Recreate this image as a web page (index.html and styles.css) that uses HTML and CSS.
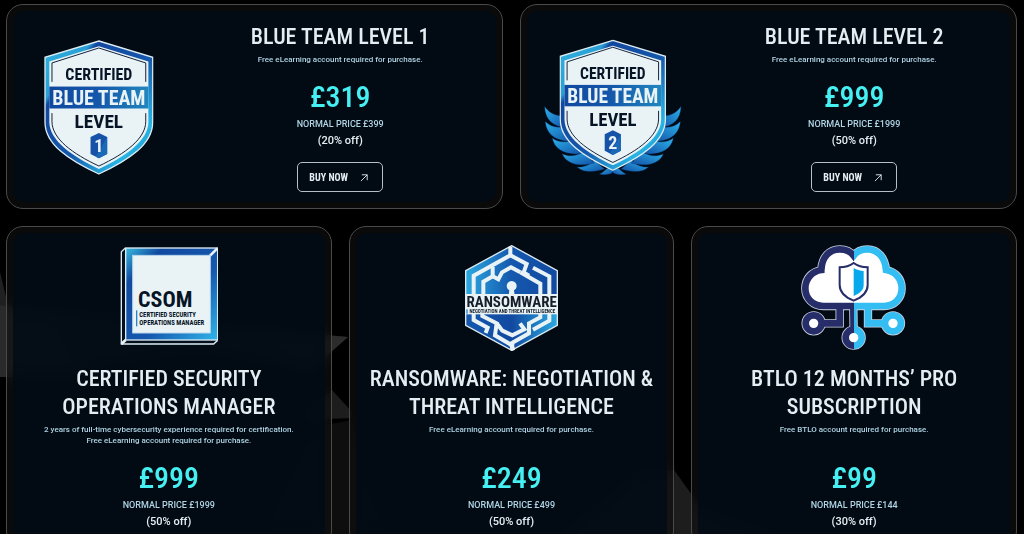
FILE: index.html
```html
<!DOCTYPE html>
<html lang="en">

<head>
	<meta charset="UTF-8">
	<meta name="viewport" content="width=device-width, initial-scale=1.0">
	<title>Certification Offers</title>
	<link rel="stylesheet" href="styles.css">
</head>

<body>
	<svg class="backdrop" viewBox="0 0 1024 534" preserveAspectRatio="xMidYMin slice" aria-hidden="true">
		<polygon points="0,272 8,305 160,318 348,337 310,370 200,352 0,377" fill="#202020" />
		<polygon points="0,305 60,318 90,377 0,377" fill="#2a2a2a" />
		<polygon points="250,330 348,337 305,375" fill="#2c2c2c" />
		<polygon points="290,420 332,390 352,412 352,418 300,420" fill="#1d1d1d" />
		<polygon points="250,534 300,430 352,420 400,534" fill="#0e0e0e" />
		<polygon points="560,534 640,470 674,470 700,506 780,534" fill="#1d1d1d" />
	</svg>

	<!-- shared badge shape -->
	<svg class="defs" aria-hidden="true">
		<defs>
			<linearGradient id="rim" x1="0" y1="0" x2="1" y2="1">
				<stop offset="0" stop-color="#2fb4e0" />
				<stop offset=".22" stop-color="#2a9fd4" />
				<stop offset=".25" stop-color="#12479f" />
				<stop offset=".55" stop-color="#1558ab" />
				<stop offset=".8" stop-color="#27b5e4" />
				<stop offset="1" stop-color="#1b7fc4" />
			</linearGradient>
			<linearGradient id="band" x1="0" y1="0" x2="1" y2="0">
				<stop offset="0" stop-color="#0f489f" />
				<stop offset=".5" stop-color="#1558ab" />
				<stop offset="1" stop-color="#2186bf" />
			</linearGradient>
			<linearGradient id="feather" x1="0" y1="0" x2="1" y2="1">
				<stop offset="0" stop-color="#2cb3ea" />
				<stop offset="1" stop-color="#124fa6" />
			</linearGradient>
			<symbol id="shield" viewBox="134 118 330 406">
				<path d="M299 121 L461 170 V365 C461 432 388 480 299 521 C210 480 137 432 137 365 V170Z" fill="url(#rim)" stroke="#dcebf3" stroke-width="4" />
				<path d="M299 137 L448 183 V364 C448 420 381 467 299 506 C217 467 150 420 150 364 V183Z" fill="#e9f3f6" />
				<path d="M158 244 V187 L299 142 L440 187 V244 M158 338 V363 C158 415 220 460 299 497 C378 460 440 415 440 363 V338" fill="none" stroke="#142137" stroke-width="3" />
				<rect x="150" y="258" width="298" height="66" fill="url(#band)" />
				<text class="badge-text" x="299" y="239" font-size="48" fill="#071426">CERTIFIED</text>
				<text class="badge-text" x="299" y="313" font-size="60" fill="#e9f3f6">BLUE TEAM</text>
				<text class="badge-text" x="299" y="384" font-size="58" fill="#071426">LEVEL</text>
				<path d="M299 398 L324 410 V461 L299 474 L274 461 V410Z" fill="#1552a8" />
				<path d="M324 410 V461 L299 474 L290 469Z" fill="#1b69b6" />
			</symbol>
		</defs>
	</svg>

	<main class="offers">
		<section class="row row-two">
			<article class="card">
				<div class="card-inner wide">
					<div class="art">
						<svg class="badge" viewBox="134 118 330 406" role="img" aria-label="Certified Blue Team Level 1">
							<use href="#shield" x="134" y="118" width="330" height="406" />
							<text class="badge-text" x="299" y="456" font-size="54" fill="#e9f3f6">1</text>
						</svg>
					</div>
					<div class="info">
						<h2>Blue Team Level 1</h2>
						<p class="note">Free eLearning account required for purchase.</p>
						<p class="price">£319</p>
						<p class="normal">Normal price £399</p>
						<p class="off">(20% off)</p>
						<button class="buy" type="button">Buy now
							<svg viewBox="0 0 10 10" aria-hidden="true"><path d="M1 9 L8 2 M2 2 H8 V8" /></svg>
						</button>
					</div>
				</div>
			</article>

			<article class="card">
				<div class="card-inner wide">
					<div class="art">
						<svg class="badge winged" viewBox="73 55 414 412" role="img" aria-label="Certified Blue Team Level 2">
							<g id="wing" fill="url(#feather)" stroke="#0a2e66" stroke-width="1">
								<path d="M240 462 C255 464 275 464 281 454 L270 440 C260 445 252 456 240 462Z" />
								<path d="M173 440 C190 458 225 456 255 446 L225 420 C210 434 192 442 173 440Z" />
								<path d="M128 400 C140 432 180 440 225 428 L190 394 C170 408 148 410 128 400Z" />
								<path d="M98 353 C104 390 145 408 192 398 L160 358 C138 368 115 366 98 353Z" />
								<path d="M77 303 C80 345 115 366 166 362 L134 318 C112 324 92 318 77 303Z" />
								<path d="M75 258 C76 296 98 318 140 322 L124 286 C104 285 88 276 75 258Z" />
							</g>
							<use href="#wing" transform="translate(560 0) scale(-1 1)" />
							<use href="#shield" x="119" y="56" width="322" height="397" />
							<text class="badge-text" x="280" y="387" font-size="54" fill="#e9f3f6">2</text>
						</svg>
					</div>
					<div class="info">
						<h2>Blue Team Level 2</h2>
						<p class="note">Free eLearning account required for purchase.</p>
						<p class="price">£999</p>
						<p class="normal">Normal price £1999</p>
						<p class="off">(50% off)</p>
						<button class="buy" type="button">Buy now
							<svg viewBox="0 0 10 10" aria-hidden="true"><path d="M1 9 L8 2 M2 2 H8 V8" /></svg>
						</button>
					</div>
				</div>
			</article>
		</section>

		<section class="row row-three">
			<article class="card">
				<div class="card-inner">
					<svg class="logo" viewBox="60 34 296 318" role="img" aria-label="CSOM">
						<defs>
							<linearGradient id="frame" x1="0" y1="0" x2="1" y2="1">
								<stop offset="0" stop-color="#38bce0" />
								<stop offset=".2" stop-color="#1149a0" />
								<stop offset=".6" stop-color="#1558ae" />
								<stop offset="1" stop-color="#2fb6ea" />
							</linearGradient>
						</defs>
						<path d="M76 43 L64 54 V331 H341 L353 320 M64 331 L77 319" fill="#04101e" stroke="#dcebf3" stroke-width="4" />
						<rect x="77" y="43" width="276" height="276" fill="url(#frame)" stroke="#dcebf3" stroke-width="4" />
						<path d="M64 331 L77 319 M328 68 L352 44" stroke="#e9f3f6" stroke-width="8" />
						<rect x="98" y="65" width="233" height="233" fill="#e9f3f6" stroke="#b8d6ec" stroke-width="3" />
						<text class="badge-text start" x="114" y="220" font-size="66" fill="#071426">CSOM</text>
						<rect x="108" y="230" width="4" height="48" fill="#2584cc" />
						<text class="badge-text start" x="118" y="249" font-size="20" fill="#071426">CERTIFIED SECURITY</text>
						<text class="badge-text start" x="118" y="275" font-size="20" fill="#071426">OPERATIONS MANAGER</text>
					</svg>
					<h2>Certified Security Operations Manager</h2>
					<p class="note">2 years of full-time cybersecurity experience required for certification.<br>Free eLearning account required for purchase.</p>
					<p class="price">£999</p>
					<p class="normal">Normal price £1999</p>
					<p class="off">(50% off)</p>
				</div>
			</article>

			<article class="card">
				<div class="card-inner">
					<svg class="logo" viewBox="60 29 280 318" role="img" aria-label="Ransomware: Negotiation and Threat Intelligence">
						<defs>
							<linearGradient id="maze" x1="0" y1="0" x2="1" y2="0">
								<stop offset="0" stop-color="#2ba9e1" />
								<stop offset=".5" stop-color="#1558ae" />
								<stop offset="1" stop-color="#1149a0" />
							</linearGradient>
							<linearGradient id="maze-low" x1="0" y1="0" x2="1" y2="0">
								<stop offset="0" stop-color="#1558ae" />
								<stop offset=".5" stop-color="#1149a0" />
								<stop offset="1" stop-color="#2ba9e1" />
							</linearGradient>
						</defs>
						<path d="M62 180 V106 L200 31 L337 106 V180Z" fill="url(#maze)" />
						<path d="M62 236 V270 L200 345 L337 270 V236Z" fill="url(#maze-low)" />
						<path d="M62 180 V106 L200 31 L337 106 V270 L200 345 L62 270Z" fill="none" stroke="#dcebf3" stroke-width="4" />
						<g fill="none" stroke="#e9f3f6" stroke-width="12">
							<path d="M86 182 V121 L196 60 V34" />
							<path d="M115 182 V139 L143 123 L160 132 L171 111 L198 96 L226 111" />
							<path d="M143 123 V95" />
							<path d="M196 60 L245 86 L236 111 L252 121" />
							<path d="M264 97 L313 123 V182" />
							<path d="M226 111 L286 145 V182" />
							<path d="M86 234 V254 L128 277 L122 293" />
							<path d="M112 234 V242 L155 264 L150 300 L198 328 L205 345" />
							<path d="M155 264 L172 286 L202 300 L238 282 L225 264" />
							<path d="M202 318 V345 M202 322 L252 294 V264 L286 246 V234" />
							<path d="M313 234 V256 L264 283" />
						</g>
						<path d="M191 180 L193 165 A15 15 0 1 1 207 165 L209 180Z" fill="#e9f3f6" />
						<rect x="62" y="176" width="276" height="61" fill="#e9f3f6" />
						<rect x="64" y="222" width="4" height="13" fill="#2584cc" />
						<text class="badge-text" x="200" y="214" font-size="45" fill="#171e29">RANSOMWARE</text>
						<text class="badge-text" x="202" y="233" font-size="15" fill="#171e29">NEGOTIATION AND THREAT INTELLIGENCE</text>
					</svg>
					<h2>Ransomware: Negotiation &amp; Threat Intelligence</h2>
					<p class="note">Free eLearning account required for purchase.</p>
					<p class="price">£249</p>
					<p class="normal">Normal price £499</p>
					<p class="off">(50% off)</p>
				</div>
			</article>

			<article class="card">
				<div class="card-inner">
					<svg class="logo" viewBox="49 30 316 318" role="img" aria-label="BTLO cloud">
						<defs>
							<linearGradient id="halves" gradientUnits="userSpaceOnUse" x1="49" y1="0" x2="365" y2="0">
								<stop offset=".5" stop-color="#262d69" />
								<stop offset=".5" stop-color="#33bdf2" />
							</linearGradient>
							<g id="cloud">
								<path d="M165 216 V265 H110 M250 216 V265 H302 M206 216 L207 290" fill="none" />
								<circle cx="87" cy="265" r="24" />
								<circle cx="325" cy="265" r="24" />
								<circle cx="207" cy="308" r="24" />
								<path d="M116 213 C84 213 62 190 62 160 C62 130 83 109 110 105 C112 66 134 43 165 43 C185 43 199 51 207 62 C215 51 230 43 248 43 C281 43 301 69 304 105 C333 110 351 132 351 160 C351 190 330 213 298 213Z" />
							</g>
						</defs>
						<use href="#cloud" fill="#fff" stroke="#c9d3e0" stroke-width="25" />
						<use href="#cloud" fill="#fff" stroke="url(#halves)" stroke-width="20" />
						<path d="M207 84 C195 93 181 97 165 97 V150 C165 174 184 188 207 197 C230 188 249 174 249 150 V97 C233 97 219 93 207 84Z" fill="#fff" stroke="#262d69" stroke-width="6" />
						<path d="M207 99 C216 104 226 107 237 108 V150 C237 166 224 176 207 183Z" fill="#08a8ec" />
					</svg>
					<h2>BTLO 12 Months’ Pro Subscription</h2>
					<p class="note">Free BTLO account required for purchase.</p>
					<p class="price">£99</p>
					<p class="normal">Normal price £144</p>
					<p class="off">(30% off)</p>
				</div>
			</article>
		</section>
	</main>
</body>

</html>
```

FILE: styles.css
```css
*,
*::after,
*::before {
	box-sizing: border-box;
}

html {
	background-color: #000;
}

body {
	margin: 0;
	color: #e4eef2;
	font-family: Roboto, "Liberation Sans", sans-serif;
	font-weight: 500;
}

.backdrop {
	position: fixed;
	top: 0;
	left: 0;
	z-index: -1;
	width: 100%;
	height: 100%;
}

.defs {
	position: absolute;
	width: 0;
	height: 0;
}

.offers {
	display: flex;
	flex-direction: column;
	gap: 17px;
	padding: 4px 7px 0 6px;
}

.row {
	display: grid;
	gap: 17px;
}

.row-two {
	grid-template-columns: repeat(2, 1fr);
}

.row-three {
	grid-template-columns: repeat(3, 1fr);
}

.card {
	display: flex;
	padding: 6px;
	border: 1px solid #494b4a;
	border-radius: 17px;
	background-color: rgba(16, 16, 16, 0.65);
	backdrop-filter: blur(8px);
}

.card-inner {
	flex: 1;
	display: flex;
	flex-direction: column;
	align-items: center;
	padding: 12px;
	border-radius: 10px;
	background-color: rgba(0, 11, 23, 0.8);
	text-align: center;
}

.card-inner.wide {
	display: grid;
	grid-template-columns: 11fr 20fr;
	padding: 12px 0 10px;
}

.art {
	display: flex;
	justify-content: center;
}

.info {
	display: flex;
	flex-direction: column;
	align-items: center;
}

.badge {
	height: 135px;
}

.winged {
	height: 137px;
}

.logo {
	height: 106px;
	margin-bottom: 14px;
}

.badge-text {
	font-family: "Roboto Condensed", "Liberation Sans Narrow", sans-serif;
	font-weight: 700;
	text-anchor: middle;
}

.badge-text.start {
	text-anchor: start;
}

h2,
.price,
.buy {
	font-family: "Roboto Condensed", "Liberation Sans Narrow", sans-serif;
	font-weight: 500;
}

h2 {
	margin: 0 0 3px;
	font-size: 22px;
	line-height: 28px;
	text-transform: uppercase;
}

p {
	margin: 0;
}

.note {
	margin-bottom: 15px;
	color: #b0d4e4;
	font-size: 8px;
	line-height: 11px;
}

.row-three .note {
	min-height: 22px;
}

.price {
	margin-bottom: 4px;
	color: #45eff2;
	font-size: 30px;
	line-height: 34px;
}

.normal {
	margin-bottom: 4px;
	color: #b0d4e4;
	font-size: 9px;
	line-height: 12px;
	text-transform: uppercase;
}

.off {
	margin-bottom: 14px;
	font-size: 11px;
	line-height: 14px;
}

.row-three .off {
	margin-bottom: 0;
}

.buy {
	display: flex;
	align-items: center;
	gap: 12px;
	height: 30px;
	padding: 0 13px 0 11px;
	border: 1px solid #b4bfc6;
	border-radius: 5px;
	background: none;
	color: #e4eef2;
	font-size: 10px;
	font-weight: 700;
	text-transform: uppercase;
	cursor: pointer;
}

.buy:hover {
	background-color: #0b2233;
}

.buy svg {
	width: 9px;
	height: 9px;
	fill: none;
	stroke: currentColor;
	stroke-width: 1;
}
```
